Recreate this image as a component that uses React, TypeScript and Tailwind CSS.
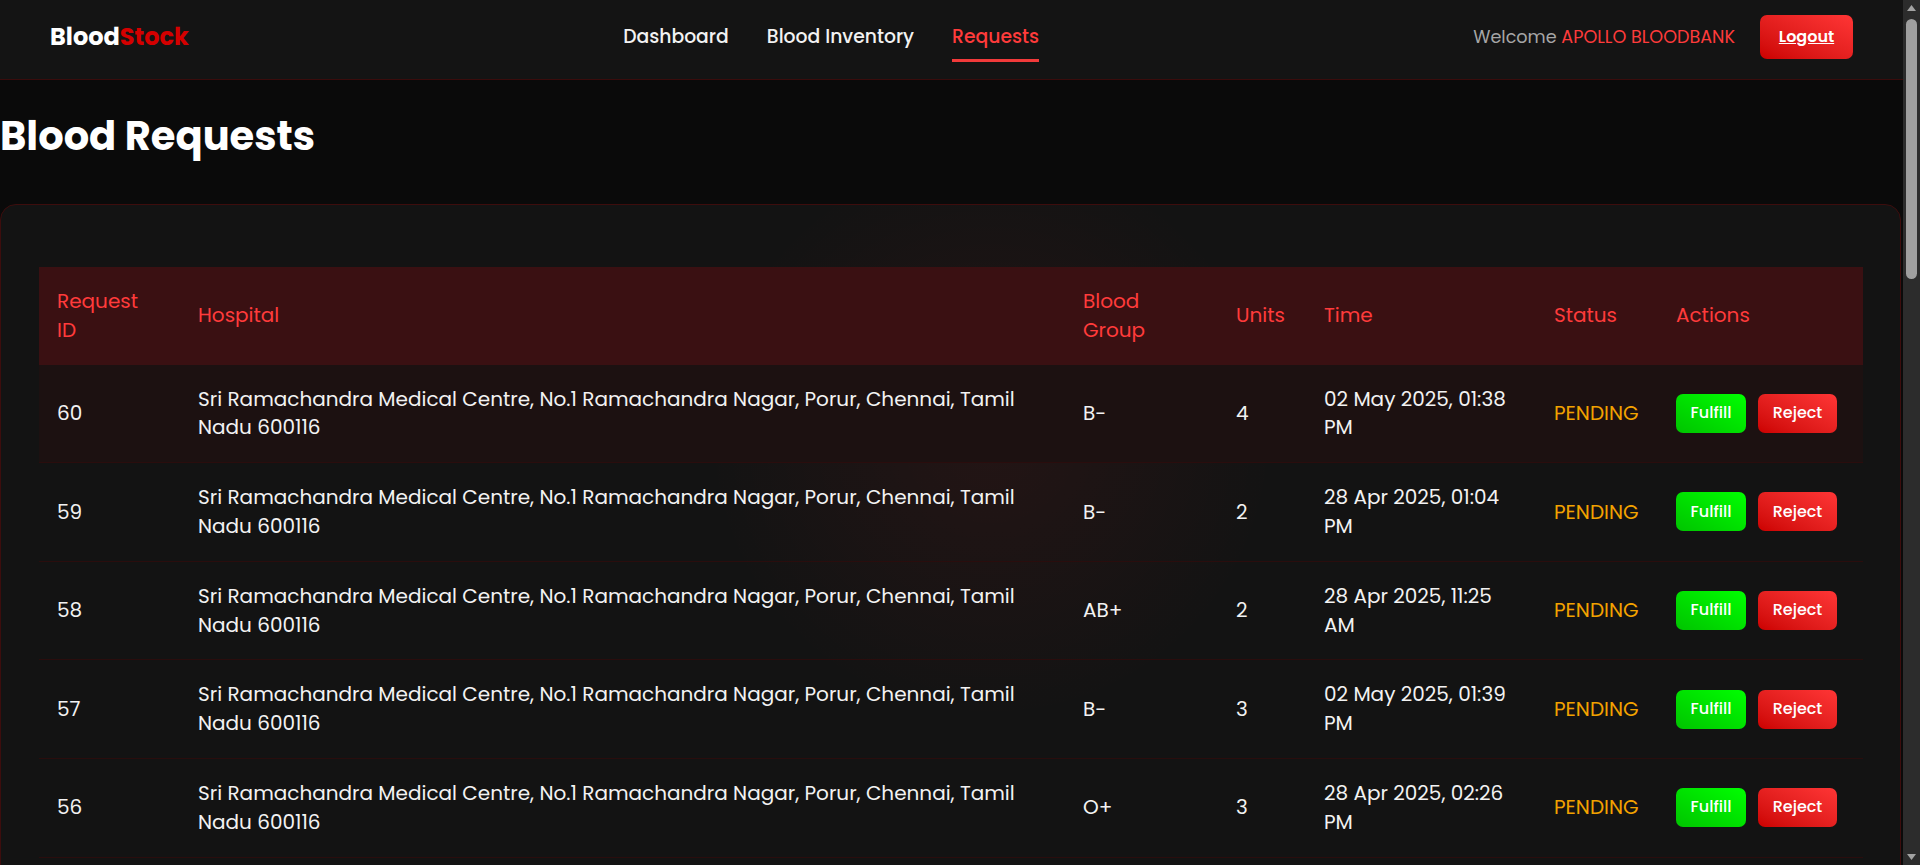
import React from 'react';

const HOSPITAL = 'Sri Ramachandra Medical Centre, No.1 Ramachandra Nagar, Porur, Chennai, Tamil Nadu 600116';

interface BloodRequest {
  id: number;
  group: string;
  units: number;
  time: string;
}

const requests: BloodRequest[] = [
  { id: 60, group: 'B-', units: 4, time: '02 May 2025, 01:38 PM' },
  { id: 59, group: 'B-', units: 2, time: '28 Apr 2025, 01:04 PM' },
  { id: 58, group: 'AB+', units: 2, time: '28 Apr 2025, 11:25 AM' },
  { id: 57, group: 'B-', units: 3, time: '02 May 2025, 01:39 PM' },
  { id: 56, group: 'O+', units: 3, time: '28 Apr 2025, 02:26 PM' },
  { id: 55, group: 'A+', units: 1, time: '27 Apr 2025, 10:12 AM' },
  { id: 54, group: 'O-', units: 2, time: '27 Apr 2025, 09:48 AM' },
  { id: 53, group: 'B+', units: 5, time: '26 Apr 2025, 06:30 PM' },
  { id: 52, group: 'AB-', units: 1, time: '26 Apr 2025, 04:15 PM' },
  { id: 51, group: 'A-', units: 2, time: '25 Apr 2025, 12:02 PM' },
  { id: 50, group: 'O+', units: 4, time: '25 Apr 2025, 10:40 AM' },
  { id: 49, group: 'B-', units: 3, time: '24 Apr 2025, 08:55 PM' },
  { id: 48, group: 'A+', units: 2, time: '24 Apr 2025, 03:21 PM' },
  { id: 47, group: 'AB+', units: 1, time: '23 Apr 2025, 11:09 AM' },
  { id: 46, group: 'O-', units: 2, time: '23 Apr 2025, 09:17 AM' },
  { id: 45, group: 'B+', units: 3, time: '22 Apr 2025, 05:44 PM' },
  { id: 44, group: 'A-', units: 1, time: '22 Apr 2025, 01:30 PM' },
  { id: 43, group: 'O+', units: 2, time: '21 Apr 2025, 10:05 AM' },
  { id: 42, group: 'B-', units: 4, time: '21 Apr 2025, 08:20 AM' },
  { id: 41, group: 'AB-', units: 2, time: '20 Apr 2025, 07:12 PM' },
  { id: 40, group: 'A+', units: 3, time: '20 Apr 2025, 02:48 PM' },
  { id: 39, group: 'O+', units: 1, time: '19 Apr 2025, 11:36 AM' },
  { id: 38, group: 'B+', units: 2, time: '19 Apr 2025, 09:02 AM' },
  { id: 37, group: 'O-', units: 4, time: '18 Apr 2025, 06:14 PM' },
];

const NavBar: React.FC = () => {
  const links = ['Dashboard', 'Blood Inventory', 'Requests'];

  return (
    <header className="flex h-[80px] items-center justify-between border-b border-[#3a0c0c] bg-[#141414] px-[50px] pb-[5px]">
      <div className="text-[24px] font-bold leading-[30px] text-white">
        Blood<span className="text-[#d40000]">Stock</span>
      </div>

      <nav className="flex gap-[38px]">
        {links.map(link => {
          const active = link === 'Requests';
          return (
            <a
              key={link}
              href="#"
              className={`relative text-[18.8px] font-medium leading-[28px] ${active ? 'text-[#ff3b3b]' : 'text-[#f2f2f2]'}`}
            >
              {link}
              {active && <span className="absolute left-0 right-0 -bottom-[11px] h-[3px] bg-[#f23a3a]"></span>}
            </a>
          );
        })}
      </nav>

      <div className="flex items-center gap-[25px]">
        <span className="text-[17.6px] text-[#a6a6a6]">
          Welcome <span className="text-[#ff3b3b]">APOLLO BLOODBANK</span>
        </span>
        <button className="h-[44px] w-[93px] rounded-[7px] bg-linear-to-tr from-[#cc0000] to-[#ff3535] text-[16px] font-semibold text-white underline">
          Logout
        </button>
      </div>
    </header>
  );
};

const RequestRow: React.FC<{ req: BloodRequest; highlight?: boolean }> = ({ req, highlight = false }) => (
  <tr className={`border-b border-[#2a0d0d] ${highlight ? 'bg-[#1c1111]' : ''}`}>
    <td className="px-[18px] py-[20px]">{req.id}</td>
    <td className="px-[18px] py-[20px]">{HOSPITAL}</td>
    <td className="px-[18px] py-[20px]">{req.group}</td>
    <td className="px-[18px] py-[20px]">{req.units}</td>
    <td className="px-[18px] py-[20px]">{req.time}</td>
    <td className="px-[18px] py-[20px] text-[#f2a200]">PENDING</td>
    <td className="px-[18px] py-[20px]">
      <div className="flex gap-[12px]">
        <button className="h-[39px] w-[70px] rounded-[7px] bg-linear-to-tr from-[#00c400] to-[#00ff00] text-[16px] font-medium text-white">
          Fulfill
        </button>
        <button className="h-[39px] w-[79px] rounded-[7px] bg-linear-to-tr from-[#cc0000] to-[#ff3535] text-[16px] font-medium text-white">
          Reject
        </button>
      </div>
    </td>
  </tr>
);

// barra de scroll da janela (tema escuro)
const ScrollTrack: React.FC = () => (
  <div className="flex w-[17px] shrink-0 flex-col bg-[#2c2c2c]">
    <svg width="17" height="17" viewBox="0 0 17 17">
      <polygon points="4,11 13,11 8.5,5" fill="#a3a3a3" />
    </svg>
    <div className="flex-1 px-[3px] pt-[2px]">
      <div className="h-[260px] rounded-full bg-[#9f9f9f]"></div>
    </div>
    <svg width="17" height="17" viewBox="0 0 17 17">
      <polygon points="4,6 13,6 8.5,12" fill="#a3a3a3" />
    </svg>
  </div>
);

export default function App() {
  return (
    <div className="flex h-screen bg-[#0a0a0a] font-['Poppins','DejaVu_Sans',sans-serif] text-white">
      <div className="min-w-0 flex-1 overflow-y-auto [scrollbar-width:none]">
        <NavBar />

        <main>
          <h1 className="mt-[32px] mb-[44px] text-[40px] font-bold leading-[48px]">Blood Requests</h1>

          {/* Cartão da tabela */}
          <div className="relative mr-[2px] overflow-hidden rounded-2xl border border-[#3d0d0d] bg-[#131313] pt-[62px] pl-[38px] pr-[37px] pb-[40px]">
            <div className="pointer-events-none absolute left-[680px] top-[-80px] h-[620px] w-[620px] rounded-full bg-[radial-gradient(circle,rgba(255,40,40,0.07),transparent_65%)]"></div>

            <table className="relative w-full table-fixed border-collapse text-left text-[20px] leading-[28.8px] text-[#f2f2f2]">
              <colgroup>
                <col className="w-[141px]" />
                <col />
                <col className="w-[153px]" />
                <col className="w-[88px]" />
                <col className="w-[230px]" />
                <col className="w-[122px]" />
                <col className="w-[205px]" />
              </colgroup>
              <thead className="bg-[#3a1012] text-[#ff3b3b]">
                <tr>
                  <th className="px-[18px] py-[20px] font-normal"><span className="inline-block w-min">Request ID</span></th>
                  <th className="px-[18px] py-[20px] font-normal">Hospital</th>
                  <th className="px-[18px] py-[20px] font-normal"><span className="inline-block w-min">Blood Group</span></th>
                  <th className="px-[18px] py-[20px] font-normal">Units</th>
                  <th className="px-[18px] py-[20px] font-normal">Time</th>
                  <th className="px-[18px] py-[20px] font-normal">Status</th>
                  <th className="px-[18px] py-[20px] font-normal">Actions</th>
                </tr>
              </thead>
              <tbody>
                {requests.map((req, idx) => (
                  <RequestRow key={req.id} req={req} highlight={idx === 0} />
                ))}
              </tbody>
            </table>
          </div>
        </main>
      </div>

      <ScrollTrack />
    </div>
  );
}
